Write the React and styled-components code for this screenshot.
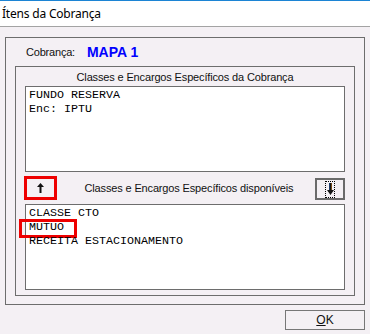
import React from 'react';
import styled, { createGlobalStyle } from 'styled-components';

const Global = createGlobalStyle`
  html, body { margin: 0; padding: 0; }
  body {
    width: 370px;
    height: 334px;
    overflow: hidden;
    background: #f4f0f4;
    font-family: "Liberation Sans", Arial, sans-serif;
  }
`;

const Window = styled.div`
  width: 370px;
  height: 334px;
  display: flex;
  flex-direction: column;
  background: #f4f0f4;
`;

const TitleBar = styled.div`
  height: 25px;
  border-top: 1px solid #1c84d4;
  border-bottom: 1px solid #a3a3a3;
  background: #ffffff;
  display: flex;
  align-items: center;
  padding-left: 2px;
  font-family: "Noto Sans", sans-serif;
  font-size: 12px;
  letter-spacing: -0.2px;
  color: #000;
`;

const Body = styled.div`
  flex: 1;
  display: flex;
  flex-direction: column;
  padding: 10px 5px 0 5px;
`;

const Frame = styled.div`
  box-sizing: border-box;
  height: 268px;
  border: 1px solid #6d6d6d;
  padding: 0 9px 8px 9px;
  display: flex;
  flex-direction: column;
`;

const CobRow = styled.div`
  height: 28px;
  display: flex;
  align-items: center;
  gap: 12px;
  padding-left: 11px;
`;

const Label = styled.span`
  font-size: 11px;
  letter-spacing: -0.2px;
  color: #111;
`;

const Value = styled.span`
  font-size: 14px;
  font-weight: bold;
  color: #0000ff;
`;

const Group = styled.div`
  flex: 1;
  border: 1px solid #6d6d6d;
  padding: 0 9px 5px 9px;
  display: flex;
  flex-direction: column;
`;

const GroupHeader = styled.div`
  height: 19px;
  display: flex;
  align-items: center;
  justify-content: center;
  font-size: 11px;
  letter-spacing: -0.15px;
  color: #111;
`;

const ListBox = styled.div`
  box-sizing: border-box;
  height: 86px;
  border: 1px solid #6d6d6d;
  background: #ffffff;
  padding: 1px 3px;
  font-family: "Liberation Mono", "Courier New", monospace;
  font-size: 11.67px;
  color: #000;
`;

const Item = styled.div`
  position: relative;
  height: 14px;
  line-height: 14px;
  white-space: pre;
`;

const Highlight = styled.span`
  position: absolute;
  left: -10px;
  top: -1px;
  width: 58px;
  height: 19px;
  box-sizing: border-box;
  border: 3px solid #ee0000;
`;

const ButtonRow = styled.div`
  height: 32px;
  box-sizing: border-box;
  padding-bottom: 4px;
  display: flex;
  align-items: flex-end;
`;

const ArrowButton = styled.div`
  box-sizing: border-box;
  width: ${(p) => p.$w}px;
  height: ${(p) => p.$h}px;
  margin-left: ${(p) => p.$ml || 0}px;
  border: ${(p) => p.$border};
  display: flex;
  align-items: center;
  justify-content: center;
  background: #f4f0f4;
`;

const Focus = styled.div`
  box-sizing: border-box;
  width: 10px;
  height: 17px;
  border: 1px dotted #000;
  display: flex;
  align-items: center;
  justify-content: center;
`;

const MidLabel = styled.div`
  flex: 1;
  align-self: center;
  padding-top: 4px;
  padding-left: 6px;
  text-align: center;
  font-size: 11px;
  letter-spacing: -0.15px;
  color: #111;
`;

const Footer = styled.div`
  display: flex;
  justify-content: flex-end;
  padding-top: 5px;
`;

const OkButton = styled.div`
  box-sizing: border-box;
  width: 80px;
  height: 20px;
  border: 1px solid #777;
  display: flex;
  align-items: center;
  justify-content: center;
  font-size: 12px;
  color: #111;
`;

const Under = styled.span`
  text-decoration: underline;
`;

const UpArrow = () => (
  <svg width="7" height="10" viewBox="0 0 7 10">
    <path d="M3.5 0 L7 4 L4.5 4 L4.5 10 L2.5 10 L2.5 4 L0 4 Z" fill="#111" />
  </svg>
);

const DownArrow = () => (
  <svg width="7" height="12" viewBox="0 0 7 12">
    <rect x="2" y="0" width="1" height="8" fill="#1f5fbf" />
    <rect x="4" y="0" width="1" height="8" fill="#d08020" />
    <path d="M2.5 0 L4.5 0 L4.5 7 L7 7 L3.5 12 L0 7 L2.5 7 Z" fill="#151515" />
  </svg>
);

export default function App() {
  return (
    <>
      <Global />
      <Window>
        <TitleBar>Ítens da Cobrança</TitleBar>
        <Body>
          <Frame>
            <CobRow>
              <Label>Cobrança:</Label>
              <Value>MAPA 1</Value>
            </CobRow>
            <Group>
              <GroupHeader>Classes e Encargos Específicos da Cobrança</GroupHeader>
              <ListBox>
                <Item>FUNDO RESERVA</Item>
                <Item>Enc: IPTU</Item>
              </ListBox>
              <ButtonRow>
                <ArrowButton $w={33} $h={24} $ml={-1} $border="3px solid #ee0000">
                  <UpArrow />
                </ArrowButton>
                <MidLabel>Classes e Encargos Específicos disponíveis</MidLabel>
                <ArrowButton $w={30} $h={22} $border="2px solid #6a6a6a">
                  <Focus>
                    <DownArrow />
                  </Focus>
                </ArrowButton>
              </ButtonRow>
              <ListBox>
                <Item>CLASSE CTO</Item>
                <Item>
                  MUTUO
                  <Highlight />
                </Item>
                <Item>RECEITA ESTACIONAMENTO</Item>
              </ListBox>
            </Group>
          </Frame>
          <Footer>
            <OkButton>
              <Under>O</Under>K
            </OkButton>
          </Footer>
        </Body>
      </Window>
    </>
  );
}
